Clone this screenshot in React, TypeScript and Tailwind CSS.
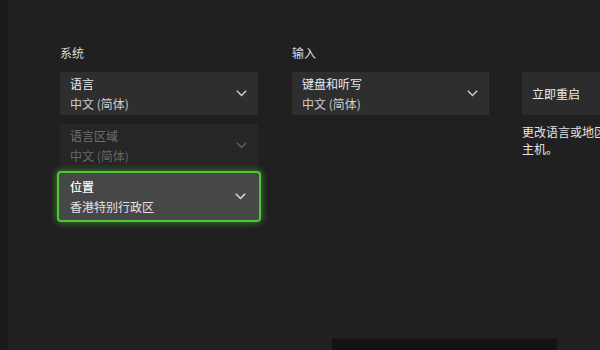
import React from 'react';

const font = { fontFamily: '"Noto Sans CJK SC", "Noto Sans", sans-serif' };

function Chevron({ color = '#cfcfcf' }: { color?: string }) {
    return (
        <svg width="11" height="7" viewBox="0 0 11 7" fill="none">
            <polyline points="0.8,0.8 5.5,5.6 10.2,0.8" stroke={color} strokeWidth="1.4" />
        </svg>
    );
}

interface SelectProps {
    title: string;
    value: string;
    disabled?: boolean;
}

function Select({ title, value, disabled }: SelectProps) {
    return (
        <div className={`h-[43px] pl-[10px] pr-[11px] flex items-center justify-between ${disabled ? 'bg-[#262626]' : 'bg-[#2e2e2e]'}`}>
            <div className="flex flex-col text-[12px] leading-[20px]">
                <span className={disabled ? 'text-[#6f6f6f]' : 'text-[#ececec]'}>{title}</span>
                <span className={disabled ? 'text-[#666666]' : 'text-[#cfcfcf]'}>{value}</span>
            </div>
            <Chevron color={disabled ? '#5e5e5e' : '#d0d0d0'} />
        </div>
    );
}

export default function App() {
    return (
        <div className="w-[600px] h-[350px] overflow-hidden flex bg-[#202020]" style={font}>
            <div className="w-[8px] shrink-0 h-full bg-[#1a1a1a]" />
            <div className="flex-1 min-w-0 flex flex-col">
                <div className="flex pl-[52px] pt-[45px]">
                    {/* 系统 */}
                    <div className="w-[198px] shrink-0 flex flex-col">
                        <div className="text-[12px] leading-[16px] text-[#dadada] mb-[11px]">系统</div>
                        <Select title="语言" value="中文 (简体)" />
                        <div className="mt-[9px]">
                            <Select title="语言区域" value="中文 (简体)" disabled />
                        </div>
                        <div className="mt-[4px] -mx-[3px] h-[51px] rounded-[4px] border-2 border-[#4fc63a] shadow-[0_0_6px_1px_rgba(70,200,50,0.55)] bg-[#474747] pl-[11px] pr-[13px] flex items-center justify-between">
                            <div className="flex flex-col text-[12px] leading-[20px]">
                                <span className="text-white font-medium">位置</span>
                                <span className="text-[#e2e2e2]">香港特别行政区</span>
                            </div>
                            <Chevron color="#e0e0e0" />
                        </div>
                    </div>

                    {/* 输入 */}
                    <div className="w-[197px] shrink-0 ml-[34px] flex flex-col">
                        <div className="text-[12px] leading-[16px] text-[#dadada] mb-[11px]">输入</div>
                        <Select title="键盘和听写" value="中文 (简体)" />
                    </div>

                    {/* 重启 */}
                    <div className="w-[220px] shrink-0 ml-[33px] flex flex-col">
                        <div className="h-[16px] mb-[11px]" />
                        <div className="h-[43px] bg-[#2c2c2c] pl-[10px] flex items-center text-[12px] text-[#ececec]">立即重启</div>
                        <div className="mt-[8px] text-[12px] leading-[17px] text-[#e4e4e4] whitespace-nowrap">
                            <div>更改语言或地区设置后需要重启</div>
                            <div>主机。</div>
                        </div>
                    </div>
                </div>
                <div className="mt-auto ml-[323px] w-[227px] h-[12px] shrink-0 bg-[#131313] border-t border-l border-r border-[#1c1c1c]" />
            </div>
        </div>
    );
}
